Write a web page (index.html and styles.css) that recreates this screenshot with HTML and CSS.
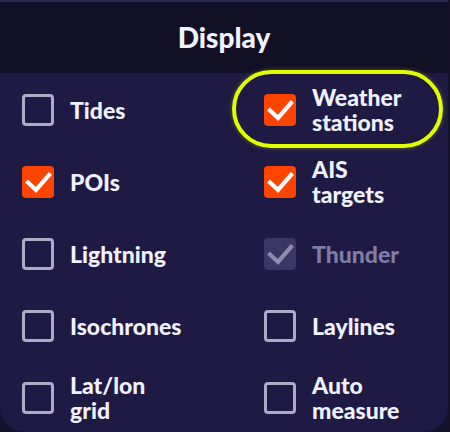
FILE: index.html
```html
<!DOCTYPE html>
<html>
<head>
<meta charset="utf-8">
<link rel="stylesheet" href="styles.css">
</head>
<body>
<div class="panel">
  <div class="header">Display</div>
  <div class="grid">
    <div class="item">
      <span class="box"></span><span class="label">Tides</span>
    </div>
    <div class="item highlighted">
      <span class="box checked"><svg viewBox="0 0 32 32"><path d="M6 16.5l8 7.5l13-15"/></svg></span><span class="label">Weather<br>stations</span>
      <span class="ring"></span>
    </div>
    <div class="item">
      <span class="box checked"><svg viewBox="0 0 32 32"><path d="M6 16.5l8 7.5l13-15"/></svg></span><span class="label">POIs</span>
    </div>
    <div class="item">
      <span class="box checked"><svg viewBox="0 0 32 32"><path d="M6 16.5l8 7.5l13-15"/></svg></span><span class="label">AIS<br>targets</span>
    </div>
    <div class="item">
      <span class="box"></span><span class="label">Lightning</span>
    </div>
    <div class="item disabled">
      <span class="box checked"><svg viewBox="0 0 32 32"><path d="M6 16.5l8 7.5l13-15"/></svg></span><span class="label">Thunder</span>
    </div>
    <div class="item">
      <span class="box"></span><span class="label">Isochrones</span>
    </div>
    <div class="item">
      <span class="box"></span><span class="label">Laylines</span>
    </div>
    <div class="item">
      <span class="box"></span><span class="label">Lat/lon<br>grid</span>
    </div>
    <div class="item">
      <span class="box"></span><span class="label">Auto<br>measure</span>
    </div>
  </div>
</div>
</body>
</html>
```
FILE: styles.css
```css
html, body {
  margin: 0;
  padding: 0;
  background: #141129;
  overflow: hidden;
}
body {
  width: 450px;
  height: 432px;
  font-family: Lato, "Noto Sans", sans-serif;
}
.panel {
  width: 448px;
  height: 432px;
  background: #1f1a43;
  border-top: 2px solid #2b2748;
  border-radius: 0 0 24px 24px;
  overflow: hidden;
  box-sizing: border-box;
  display: flex;
  flex-direction: column;
}
.header {
  height: 71px;
  flex: none;
  background: #121026;
  color: #f2f3ff;
  font-weight: 900;
  font-size: 28px;
  display: flex;
  align-items: center;
  justify-content: center;
  padding-bottom: 2px;
  box-sizing: border-box;
}
.grid {
  display: grid;
  grid-template-columns: 242px 1fr;
  grid-auto-rows: 72px;
  padding: 1px 0 0 22px;
}
.item {
  display: flex;
  align-items: center;
  gap: 16px;
  position: relative;
}
.box {
  width: 32px;
  height: 32px;
  flex: none;
  box-sizing: border-box;
  border: 3px solid #aeabc4;
  border-radius: 4px;
  display: flex;
}
.box.checked {
  border: none;
  background: #ff4400;
}
.box svg {
  width: 32px;
  height: 32px;
}
.box svg path {
  fill: none;
  stroke: #ffffff;
  stroke-width: 4.2;
  stroke-linecap: square;
  stroke-linejoin: miter;
}
.label {
  color: #f0f1ff;
  font-weight: 900;
  font-size: 23px;
  line-height: 25px;
}
.disabled .box.checked {
  background: #3b3764;
}
.disabled .box svg path {
  stroke: #8e8bac;
}
.disabled .label {
  color: #7f7ca5;
}
.ring {
  position: absolute;
  left: -32px;
  top: -4px;
  width: 211px;
  height: 78px;
  box-sizing: border-box;
  border: 4px solid #e2ff00;
  border-radius: 40px;
  box-shadow: 0 0 4px rgba(226, 255, 0, 0.35);
  pointer-events: none;
}
```
